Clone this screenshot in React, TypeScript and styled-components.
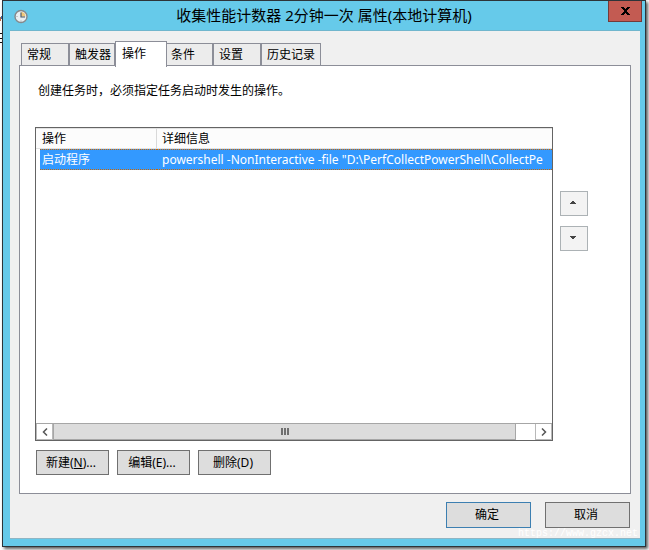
import React, { useState } from "react";
import styled, { createGlobalStyle } from "styled-components";

const GlobalStyle = createGlobalStyle`
  * { box-sizing: border-box; }
  body {
    margin: 0;
    background: #fff;
    color: #000;
    font: 12px/16px "Noto Sans", "Noto Sans CJK SC", sans-serif;
  }
  button { font: inherit; color: inherit; padding: 0; border-radius: 0; }
`;

const Desktop = styled.div`
  position: relative;
  display: flex;
  min-height: 100vh;
  padding: 0 3px 3px 2px;
  overflow: hidden;
`;

const Backdrop = styled.svg`
  position: absolute;
  left: 0;
  top: 0;
`;

const Dialog = styled.section`
  position: relative;
  flex: 1;
  min-width: 0;
  display: flex;
  flex-direction: column;
  padding: 0 5px 7px 7px;
  background: #66caea;
  border: 1px solid #2d3439;
  box-shadow: 2px 2px 3px rgba(0, 0, 0, 0.65);
`;

const TitleBar = styled.header`
  display: grid;
  grid-template-columns: 38px 1fr 34px;
  align-items: start;
  height: 29px;
  margin-right: -2px;
`;

const ClockIcon = styled.svg`
  margin: 8px 0 0 4px;
`;

const Title = styled.h1`
  margin: 0;
  padding-right: 8px;
  font-size: 15px;
  line-height: 29px;
  font-weight: 400;
  text-align: center;
  white-space: nowrap;
`;

const CloseButton = styled.button`
  width: 34px;
  height: 21px;
  display: flex;
  align-items: center;
  justify-content: center;
  background: #c35b52;
  border: 1px solid #743a38;
  border-top: 0;
`;

const Content = styled.main`
  flex: 1;
  display: flex;
  flex-direction: column;
  padding: 9px 9px 10px;
  background: #f0f0f0;
  border-top: 1px solid #70b6cd;
  border-bottom: 1px solid #8fb5c4;
`;

const TabList = styled.div`
  display: flex;
  align-items: flex-end;
  height: 25px;
  padding-left: 2px;
`;

const Tab = styled.button<{ $active: boolean; $width: number }>`
  position: relative;
  z-index: ${(p) => (p.$active ? 1 : 0)};
  width: ${(p) => p.$width}px;
  height: ${(p) => (p.$active ? 26 : 22)}px;
  margin-bottom: ${(p) => (p.$active ? -2 : 0)}px;
  padding: ${(p) => (p.$active ? "0 0 2px 6px" : "0 0 0 5px")};
  flex: none;
  text-align: left;
  white-space: nowrap;
  background: ${(p) => (p.$active ? "#fff" : "#ececec")};
  border: 1px solid #8c8e98;
  border-bottom: 0;
  &[aria-selected="true"] + & { margin-left: -2px; }
`;

const Panel = styled.div`
  flex: 1;
  display: flex;
  flex-direction: column;
  padding: 17px 42px 18px 15px;
  background: #fff;
  border: 1px solid #8c8e98;
`;

const Hint = styled.p`
  margin: 0 0 28px 3px;
`;

const ListArea = styled.div`
  flex: 1;
  display: flex;
  gap: 7px;
`;

const ListBox = styled.div`
  flex: 1;
  min-width: 0;
  display: flex;
  flex-direction: column;
  border: 1px solid #646464;
  overflow: hidden;
`;

const TableView = styled.div`
  flex: 1;
  overflow: hidden;
`;

const Table = styled.table`
  width: 100%;
  table-layout: fixed;
  border-collapse: separate;
  border-spacing: 0;
`;

const HeadCell = styled.th`
  height: 21px;
  padding: 0 0 0 5px;
  font-weight: 400;
  text-align: left;
  background: #fcfcfc;
  border-top: 1px solid #e2e2e2;
  border-bottom: 1px solid #e2e2e2;
  &:first-child {
    width: 121px;
    padding-left: 6px;
    border-right: 1px solid #d9d9d9;
  }
`;

const BodyCell = styled.td`
  height: 21px;
  padding: 0 0 0 5px;
  color: #fff;
  white-space: nowrap;
  background:
    repeating-linear-gradient(90deg, #cc6600 0 1px, #3399ff 1px 2px) top / 100% 1px no-repeat,
    repeating-linear-gradient(90deg, #cc6600 0 1px, #3399ff 1px 2px) bottom / 100% 1px no-repeat,
    #3399ff;
  &:first-child {
    padding-left: 2px;
    border-left: 4px solid #fff;
    background-clip: padding-box;
  }
`;

const ScrollBar = styled.div`
  display: flex;
  height: 17px;
  background: #fff;
  border-top: 1px solid #a6a6a6;
`;

const ScrollButton = styled.button`
  width: 17px;
  display: flex;
  align-items: center;
  justify-content: center;
  background: #fff;
  border: 1px solid #b8b8b8;
  border-top: 0;
`;

const ScrollTrack = styled.div`
  flex: 1;
  display: flex;
  padding-right: 19px;
`;

const ScrollThumb = styled.div`
  flex: 1;
  display: flex;
  align-items: center;
  justify-content: center;
  background: #dcdcdc;
  border: 1px solid #a6a6a6;
  border-top: 0;
`;

const OrderButtons = styled.div`
  display: flex;
  flex-direction: column;
  gap: 10px;
  padding-top: 64px;
`;

const OrderButton = styled.button`
  width: 28px;
  height: 25px;
  display: flex;
  align-items: center;
  justify-content: center;
  padding: 0 2px 2px 0;
  background: #f3f3f3;
  border: 1px solid #acb2b5;
`;

const Actions = styled.div`
  display: flex;
  gap: 8px;
  padding: 9px 0 0 1px;
`;

const Button = styled.button<{ $wide?: boolean; $primary?: boolean }>`
  width: ${(p) => (p.$wide ? 85 : 73)}px;
  height: ${(p) => (p.$wide ? 26 : 25)}px;
  padding-right: 3px;
  background: #dddddd;
  border: 1px solid ${(p) => (p.$primary ? "#3c7fb1" : "#707070")};
`;

const Footer = styled.footer`
  display: flex;
  justify-content: flex-end;
  gap: 14px;
  padding: 8px 1px 0 0;
`;

const Watermark = styled.span`
  position: absolute;
  right: 7px;
  bottom: 5px;
  color: #fff;
  font: 10px/14px "Liberation Mono", monospace;
  pointer-events: none;
`;

const tabs = [
  { label: "常规", width: 48 },
  { label: "触发器", width: 46 },
  { label: "操作", width: 52 },
  { label: "条件", width: 48 },
  { label: "设置", width: 48 },
  { label: "历史记录", width: 60 },
];

export default function App() {
  const [active, setActive] = useState("操作");
  return (
    <Desktop>
      <GlobalStyle />
      <Backdrop width="2" height="50" aria-hidden="true" shapeRendering="crispEdges">
        <path d="M0 17h1v4H0z" fill="#b56a45" />
        <path d="M1 16h1v3H1z" fill="#3a6fae" />
        <path d="M0 33h2v1H0zM0 38h2v1H0zM0 42h2v1H0z" fill="#111" />
      </Backdrop>
      <Dialog aria-labelledby="dialog-title">
        <TitleBar>
          <ClockIcon width="14" height="15" viewBox="0 0 14 15" aria-hidden="true">
            <circle cx="7" cy="7.5" r="6" fill="#e9eff2" stroke="#85898b" strokeWidth="1.4" />
            <path d="M7 7.5V3a4.5 4.5 0 0 1 4.5 4.5z" fill="#f2c879" />
            <path d="M7 3.5v4.5h4" fill="none" stroke="#4d5b6b" strokeWidth="1.2" />
            <path d="M7 11.5v1M2.5 7.5h1" stroke="#9ba7ae" />
          </ClockIcon>
          <Title id="dialog-title">收集性能计数器 2分钟一次 属性(本地计算机)</Title>
          <CloseButton aria-label="关闭">
            <svg width="9" height="8" viewBox="0 0 9 8" shapeRendering="crispEdges">
              <path d="M0 0h3v1h1v1h1V1h1V0h3v1H8v1H7v1H6v2h1v1h1v1h1v1H6V7H5V6H4v1H3v1H0V7h1V6h1V5h1V3H2V2H1V1H0z" fill="#000" />
            </svg>
          </CloseButton>
        </TitleBar>
        <Content>
          <TabList role="tablist">
            {tabs.map((t) => (
              <Tab
                key={t.label}
                role="tab"
                aria-selected={active === t.label}
                $active={active === t.label}
                $width={t.width}
                onClick={() => setActive(t.label)}
              >
                {t.label}
              </Tab>
            ))}
          </TabList>
          <Panel role="tabpanel">
            <Hint>创建任务时，必须指定任务启动时发生的操作。</Hint>
            <ListArea>
              <ListBox>
                <TableView>
                  <Table>
                    <thead>
                      <tr>
                        <HeadCell scope="col">操作</HeadCell>
                        <HeadCell scope="col">详细信息</HeadCell>
                      </tr>
                    </thead>
                    <tbody>
                      <tr>
                        <BodyCell>启动程序</BodyCell>
                        <BodyCell>
                          powershell -NonInteractive -file "D:\PerfCollectPowerShell\CollectPe
                        </BodyCell>
                      </tr>
                    </tbody>
                  </Table>
                </TableView>
                <ScrollBar>
                  <ScrollButton aria-label="向左滚动">
                    <svg width="6" height="8" viewBox="0 0 6 8">
                      <path d="M5 0.5L1.5 4L5 7.5" fill="none" stroke="#555" strokeWidth="1.5" />
                    </svg>
                  </ScrollButton>
                  <ScrollTrack>
                    <ScrollThumb>
                      <svg width="8" height="7" shapeRendering="crispEdges">
                        <path d="M0 0h2v7H0zM3 0h2v7H3zM6 0h2v7H6z" fill="#707070" />
                      </svg>
                    </ScrollThumb>
                  </ScrollTrack>
                  <ScrollButton aria-label="向右滚动">
                    <svg width="6" height="8" viewBox="0 0 6 8">
                      <path d="M1 0.5L4.5 4L1 7.5" fill="none" stroke="#555" strokeWidth="1.5" />
                    </svg>
                  </ScrollButton>
                </ScrollBar>
              </ListBox>
              <OrderButtons>
                <OrderButton aria-label="上移">
                  <svg width="6" height="3" shapeRendering="crispEdges">
                    <path d="M2 0h2v1h1v1h1v1H0V2h1V1h1z" fill="#444" />
                  </svg>
                </OrderButton>
                <OrderButton aria-label="下移">
                  <svg width="6" height="3" shapeRendering="crispEdges">
                    <path d="M0 0h6v1H5v1H4v1H2V2H1V1H0z" fill="#444" />
                  </svg>
                </OrderButton>
              </OrderButtons>
            </ListArea>
            <Actions>
              <Button>新建(<u>N</u>)...</Button>
              <Button>编辑(E)...</Button>
              <Button>删除(D)</Button>
            </Actions>
          </Panel>
          <Footer>
            <Button $wide $primary>确定</Button>
            <Button $wide>取消</Button>
          </Footer>
        </Content>
        <Watermark>https://www.gzcx.net</Watermark>
      </Dialog>
    </Desktop>
  );
}
